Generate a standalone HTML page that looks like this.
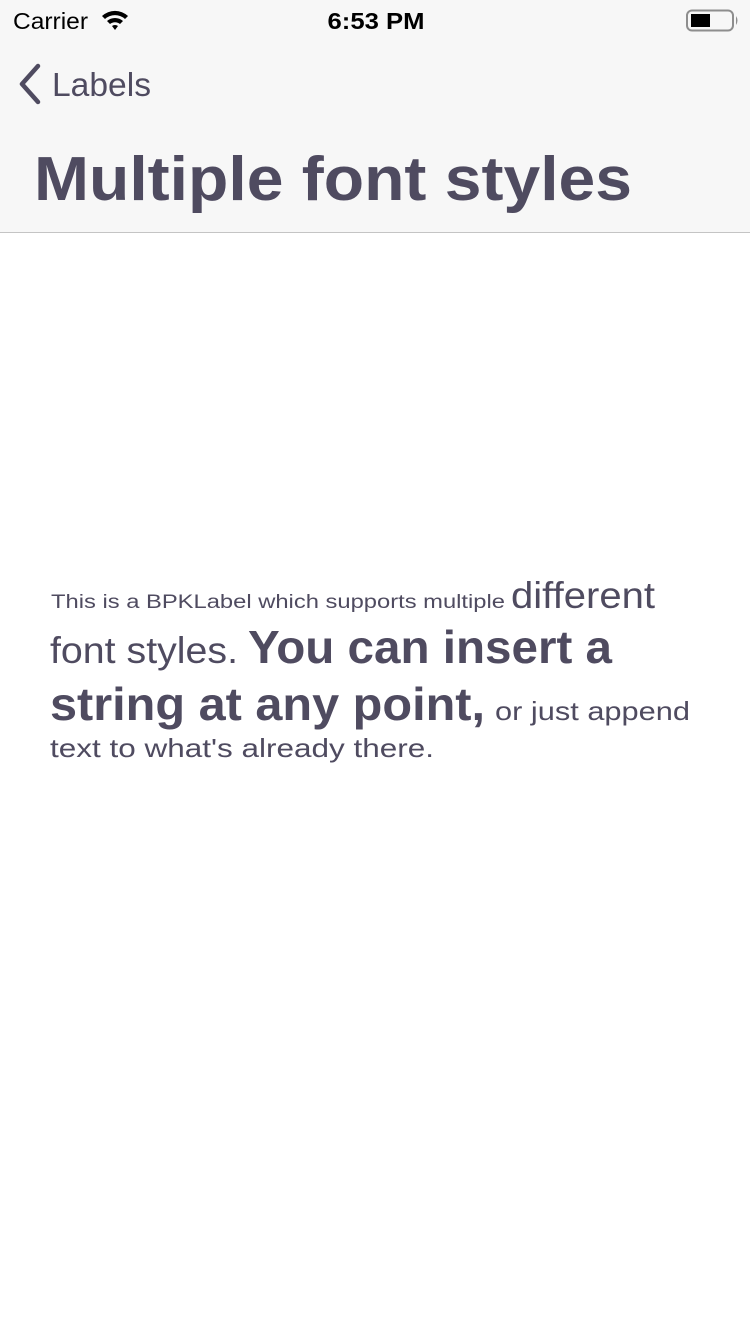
<!DOCTYPE html>
<html><head><meta charset="utf-8"><style>
html,body{margin:0;padding:0;width:750px;height:1334px;background:#fff;overflow:hidden}
svg{display:block}
</style></head><body>
<svg width="750" height="1334" viewBox="0 0 750 1334" xmlns="http://www.w3.org/2000/svg" font-family="Liberation Sans, sans-serif">
<rect x="0" y="0" width="750" height="232" fill="#f7f7f7"/>
<rect x="0" y="232" width="750" height="1" fill="#c4c4c4"/>
<text x="13" y="29" font-size="23" fill="#000" textLength="75" lengthAdjust="spacingAndGlyphs">Carrier</text>
<g fill="#000">
<path d="M102 16 A19 19 0 0 1 128 16 L125 19 A15 15 0 0 0 105 19 Z"/>
<path d="M107 21 A12 12 0 0 1 123 21 L120 24 A8 8 0 0 0 110 24 Z"/>
<path d="M112 26 A5 5 0 0 1 118 26 L115 30 Z"/>
</g>
<text x="376" y="29" font-size="23" font-weight="bold" fill="#000" text-anchor="middle" textLength="97" lengthAdjust="spacingAndGlyphs">6:53 PM</text>
<rect x="687" y="10.5" width="46" height="20" rx="5" fill="none" stroke="#8e8e8e" stroke-width="2"/>
<rect x="691" y="14" width="19" height="13" fill="#000"/>
<path d="M736 16 Q739 20.5 736 25 Z" fill="#8e8e8e"/>
<path d="M38 66 L22 84 L38 102" fill="none" stroke="#4f4b60" stroke-width="4.5" stroke-linecap="round" stroke-linejoin="round"/>
<text x="52" y="96" font-size="33" fill="#4f4b60" textLength="99" lengthAdjust="spacingAndGlyphs">Labels</text>
<text x="34" y="200" font-size="62" font-weight="bold" fill="#4f4b60" textLength="598" lengthAdjust="spacingAndGlyphs">Multiple font styles</text>
<g fill="#4f4b60">
<text x="51" y="608" font-size="19" textLength="454" lengthAdjust="spacingAndGlyphs">This is a BPKLabel which supports multiple</text>
<text x="511" y="608" font-size="37" textLength="144" lengthAdjust="spacingAndGlyphs">different</text>
<text x="50" y="663" font-size="37" textLength="188" lengthAdjust="spacingAndGlyphs">font styles.</text>
<text x="248" y="663" font-size="46" font-weight="bold" textLength="364" lengthAdjust="spacingAndGlyphs">You can insert a</text>
<text x="50" y="720" font-size="46" font-weight="bold" textLength="435" lengthAdjust="spacingAndGlyphs">string at any point,</text>
<text x="495" y="720" font-size="26" textLength="195" lengthAdjust="spacingAndGlyphs">or just append</text>
<text x="50" y="757" font-size="26" textLength="384" lengthAdjust="spacingAndGlyphs">text to what's already there.</text>
</g>
</svg>
</body></html>
